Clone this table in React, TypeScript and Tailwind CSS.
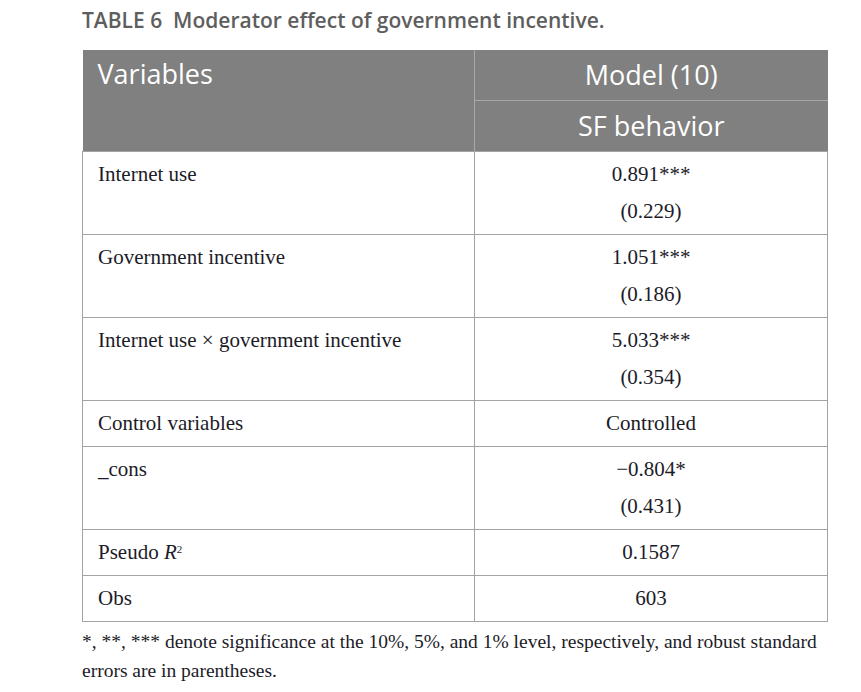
const rows: { label: React.ReactNode; value: string; se?: string }[] = [
  { label: "Internet use", value: "0.891***", se: "(0.229)" },
  { label: "Government incentive", value: "1.051***", se: "(0.186)" },
  { label: "Internet use × government incentive", value: "5.033***", se: "(0.354)" },
  { label: "Control variables", value: "Controlled" },
  { label: "_cons", value: "−0.804*", se: "(0.431)" },
  {
    label: (
      <>
        Pseudo <i>R</i>
        <sup className="text-[11px]">2</sup>
      </>
    ),
    value: "0.1587",
  },
  { label: "Obs", value: "603" },
];

export default function App() {
  return (
    <div className="min-h-[692px] w-[861px] bg-white pl-[82px] pt-[5px]">
      <h2 className="text-[21px] font-semibold leading-[30px] text-[#5e5e5e] [font-family:'Open_Sans',sans-serif]">
        TABLE 6&nbsp; Moderator effect of government incentive.
      </h2>

      <table className="mt-[15px] w-[746px] border-collapse text-left">
        <thead className="bg-[#808080] text-white [font-family:'Open_Sans',sans-serif]">
          <tr>
            <th
              rowSpan={2}
              className="w-[392px] px-[15px] pb-[56px] pt-[4px] align-top text-[27px] font-normal leading-[40px]"
            >
              Variables
            </th>
            <th className="h-[50px] border-b border-l border-[#a8a8a8] text-center text-[27px] font-normal leading-[40px]">
              Model (10)
            </th>
          </tr>
          <tr>
            <th className="h-[51px] border-l border-[#a8a8a8] text-center text-[27px] font-normal leading-[40px]">
              SF behavior
            </th>
          </tr>
        </thead>
        <tbody className="text-[21px] leading-[37px] text-[#1c1c28] [font-family:'Liberation_Serif',serif]">
          {rows.map((row, i) => (
            <tr key={i}>
              <td className="border border-[#a3a3a3] px-[15px] pb-[4px] pt-[4px] align-top">{row.label}</td>
              <td className="border border-[#a3a3a3] pb-[4px] pt-[4px] text-center align-top">
                <div>{row.value}</div>
                {row.se ? <div>{row.se}</div> : null}
              </td>
            </tr>
          ))}
        </tbody>
      </table>

      <p className="mt-[5px] w-[750px] text-[19.5px] leading-[29px] text-[#1c1c28] [font-family:'Liberation_Serif',serif]">
        *, **, *** denote significance at the 10%, 5%, and 1% level, respectively, and robust standard errors are in
        parentheses.
      </p>
    </div>
  );
}
